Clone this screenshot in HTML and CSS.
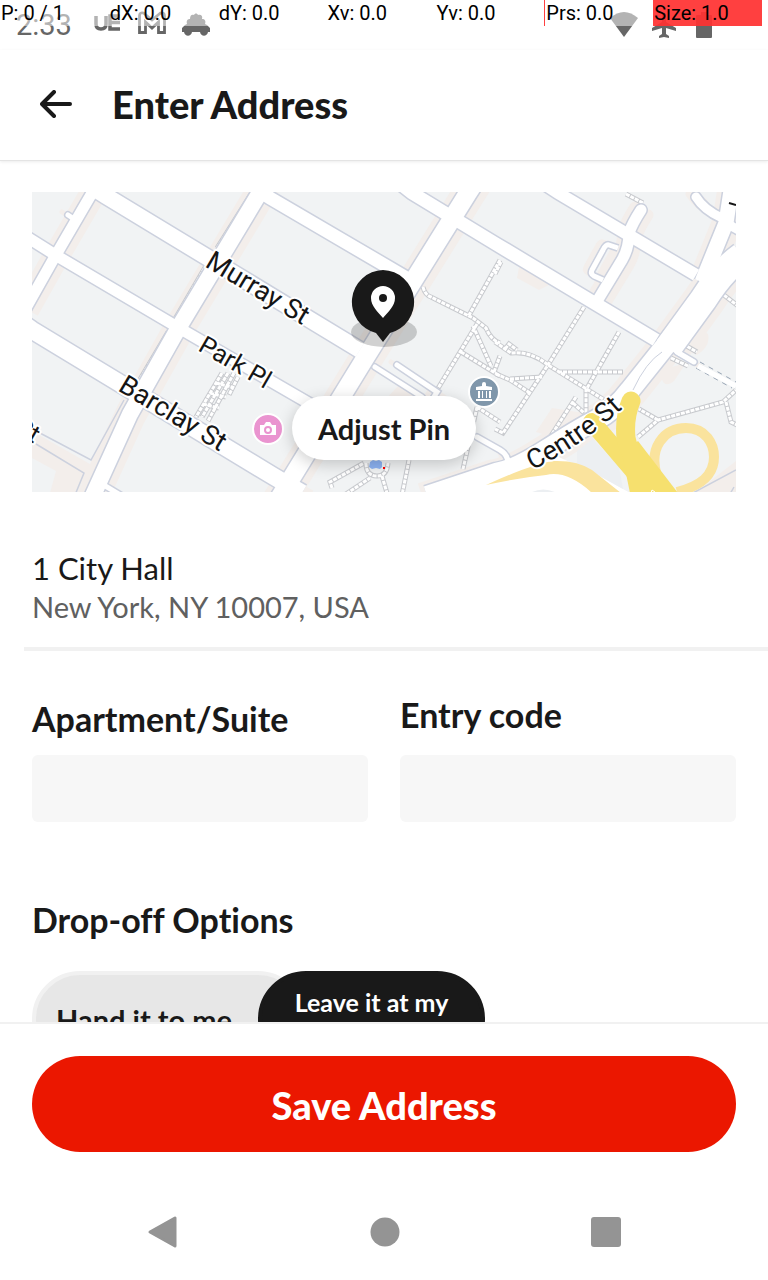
FILE: index.html
```html
<!DOCTYPE html>
<html lang="en">
<head>
<meta charset="utf-8">
<meta name="viewport" content="width=device-width, initial-scale=1">
<title>Enter Address</title>
<link rel="stylesheet" href="styles.css">
</head>
<body>
<div class="screen">
  <div class="status">
    <span class="clock">2:33</span>
    <svg class="status-icon" width="28" height="28" viewBox="0 0 28 28"><path d="M2 5v8q0 5 5 5t5-5V5M26 5H16v13h10M16 11.500h10" fill="none" stroke="#666" stroke-width="3.500"/></svg>
    <svg class="status-icon" width="28" height="28" viewBox="0 0 28 28"><path d="M1.500 21.500V5q0-4 4-3l8.500 7 8.500-7q4-1 4 3v16.500h-6V11L14 17l-6.500-6v10.500z" fill="none" stroke="#666" stroke-width="2.800"/></svg>
    <svg class="status-icon" width="28" height="28" viewBox="0 0 28 28"><path d="M5 13c-1-4 1-5 3-5 0-4 2-5 4-4 1-2 3-2 4 0 3-1 5 1 4 4 3 0 4 2 3 5l2 1 3 3v4h-2c-1 5-7 5-8 0h-8c-1 5-7 5-8 0H0v-4l3-3z" fill="#666"/></svg>
    <span class="status-gap"></span>
    <svg class="status-icon" width="28" height="28" viewBox="0 0 28 28"><path d="M0 7Q14-5 28 7L14 26z" fill="#666"/></svg>
    <svg class="status-icon" width="28" height="28" viewBox="0 0 28 28"><path d="M12 3q2-3 4 0v8l10 6v3l-10-3v6l3 2v2l-5-1-5 1v-2l3-2v-6L2 20v-3l10-6z" fill="#666"/></svg>
    <svg class="status-icon" width="28" height="28" viewBox="0 0 28 28"><path d="M7 4h4V1h6v3h4q1 0 1 1v21q0 1-1 1H7q-1 0-1-1V5q0-1 1-1z" fill="#666"/></svg>
  </div>
  <div class="pointer-bar">
    <span>P: 0 / 1</span><span>dX: 0.0</span><span>dY: 0.0</span><span>Xv: 0.0</span><span>Yv: 0.0</span><span class="pressure">Prs: 0.0</span><span class="size">Size: 1.0</span>
  </div>

  <header class="header">
    <button class="back" type="button" aria-label="Back"><svg width="32" height="28" viewBox="0 0 32 28"><path d="M30 14H2.500M14 2L2 14l12 12" fill="none" stroke="#191919" stroke-width="4" stroke-linecap="round" stroke-linejoin="round"/></svg></button>
    <h1 class="title">Enter Address</h1>
  </header>

  <main class="content">
    <section class="map">
      <svg class="map-art" viewBox="0 0 704 300" preserveAspectRatio="xMidYMid slice" role="img" aria-label="Map around City Hall">
        <defs>
          <g id="roads">
            <path d="M-10 42L25 64 147 136 280 213" stroke-width="11"/>
            <path d="M60-5L74 4 328 158" stroke-width="16"/>
            <path d="M-10 131L0 138 241 284 270 301" stroke-width="17"/>
            <path d="M226-2L238 6 378 88" stroke-width="13"/>
            <path d="M370-7L380 1 464 52 624 148" stroke-width="13"/>
            <path d="M514-7L526 1 664 83" stroke-width="12"/>
            <path d="M443-10L436 1 332 168 246 308" stroke-width="18"/>
            <path d="M233-8L227 2 147 135 98 222 58 310" stroke-width="16"/>
            <path d="M65-8L60 1 21 68-6 116" stroke-width="11"/>
            <path d="M710 64Q690 78 671 108L636 156" stroke-width="27"/>
            <path d="M642 143L598 198Q583 218 564 228T514 258 464 281L395 304" stroke-width="20"/>
            <path d="M700-8L694 31 670 90" stroke-width="15"/>
            <path d="M664 5Q672 18 690 26M694 31l16 9" stroke-width="9" stroke-linecap="round"/>
            <path d="M609 18Q600 32 597 41 597 56 590 68L567 106" stroke-width="11" stroke-linecap="round"/>
            <path d="M586 56L577 53Q574 52 571 58L560 78Q558 82 562 84L571 88" stroke-width="5"/>
            <path d="M365 173L405 200 400 208M343 175L390 205M445 245L468 258Q478 264 476 276M645 160l17 10M36 23l6 4" stroke-width="5" stroke-linecap="round"/>
            <path d="M70 292l30 18" stroke-width="5"/>
          </g>
          <g id="walks">
            <path d="M391 95q2 8 8 10l42 21 13 10q5 12 14 15M468 68l-32 57M445 132l-40 66M441 134l18 40M429 160l39 24M462 180l6-16"/>
            <path d="M552 115l-36 58-45 68-8-4M587 140l-33 58v26M526 180h65M463 150l16 11q20-2 37 12l58 36M464 182l14 6 20 13M478 187l32-2M544 205l-31 48M541 211l20 18M469 70l-6 12M473 157l4-5 8 6"/>
            <path d="M606 245l20-17 65-18 13-12M626 228l-19-11M694 210l5 20 8 4M688 100l18 14M651 152l14 8M639 166l17 8M594 2l17 9"/>
            <path d="M300 296l-2-6 34-19M302 310l36-24M334 271q0 13 11 13 10 0 11-13M350 284l7 24M377 268l-8 40M445 215l23 15M445 215l-14 62"/>
            <path d="M219 2l-34 54M175 72l-32 55M136 140l-29 49M190 181l-26 44M202 181l-26 48M196 181l-26 44M206 185l-9 18M184 191l16 4M178 201l16 4M171 212l16 4"/>
          </g>
          <path id="centre" d="M500 278Q550 255 602 206"/>
        </defs>
        <rect width="704" height="300" fill="#f1f3f4"/>
        <use href="#roads" fill="none" stroke="#f3eeeb" transform="translate(7 5)"/>
        <use href="#roads" fill="none" stroke="#f3eeeb" transform="translate(-6 -3)"/>
        <path d="M90 205L58 272 0 239v24l52 29-6 10h16l44-92zM0 252v14l24 13-6 22h28l8-20z" fill="#f3eeeb"/>
        <path d="M665 135q-17-3-22 19l22 9q14-9 11-21zM629 178l25-7-12 18q-13 10-13-11zM504 240l16-24 38 6-31 25zM366 194l32 14-12 22-33-22zM664 300l40-31v31zM487 75l38 14-18 9-22-12z" fill="#f3eeeb"/>
        <path d="M92 208L59 268 6 240M4 252l48 29-9 22M704 278l-45 24M702 295l-4 7" fill="none" stroke="#ccd1de" stroke-width="1.500"/>
        <use href="#walks" fill="none" stroke="#c8cace" stroke-width="5"/>
        <use href="#walks" fill="none" stroke="#fff" stroke-width="3" stroke-dasharray="4 1"/>
        <g class="road-edge">
            <path d="M-10 42L25 64 147 136 280 213" stroke-width="14"/>
            <path d="M60-5L74 4 328 158" stroke-width="19"/>
            <path d="M-10 131L0 138 241 284 270 301" stroke-width="20"/>
            <path d="M226-2L238 6 378 88" stroke-width="16"/>
            <path d="M370-7L380 1 464 52 624 148" stroke-width="16"/>
            <path d="M514-7L526 1 664 83" stroke-width="15"/>
            <path d="M443-10L436 1 332 168 246 308" stroke-width="21"/>
            <path d="M233-8L227 2 147 135 98 222 58 310" stroke-width="19"/>
            <path d="M65-8L60 1 21 68-6 116" stroke-width="14"/>
            <path d="M710 64Q690 78 671 108L636 156" stroke-width="30"/>
            <path d="M642 143L598 198Q583 218 564 228T514 258 464 281L395 304" stroke-width="23"/>
            <path d="M700-8L694 31 670 90" stroke-width="18"/>
            <path d="M664 5Q672 18 690 26M694 31l16 9" stroke-width="12" stroke-linecap="round"/>
            <path d="M609 18Q600 32 597 41 597 56 590 68L567 106" stroke-width="14" stroke-linecap="round"/>
            <path d="M586 56L577 53Q574 52 571 58L560 78Q558 82 562 84L571 88" stroke-width="8"/>
            <path d="M365 173L405 200 400 208M343 175L390 205M445 245L468 258Q478 264 476 276M645 160l17 10M36 23l6 4" stroke-width="8" stroke-linecap="round"/>
            <path d="M70 292l30 18" stroke-width="8"/>
        </g>
        <use href="#roads" fill="none" stroke="#fff"/>
        <path d="M400 304L470 282 520 262 560 280 600 302z" fill="#fff"/>
        <path d="M498 301q13-7 27 0zM545 259l16-12 26 28 4 22-46-26z" fill="#eceff2"/>
        <path d="M630 160q-16 10-29 38" fill="none" stroke="#ccd1de"/>
        <path d="M668 170l36 20M664 176l36 20" fill="none" stroke="#98a5b5" stroke-dasharray="5 5"/>
        <path d="M666 174l38 20" fill="none" stroke="#fff" stroke-width="5"/>
        <path d="M454 293Q500 272 521 269 545 268 560 278L589 301H560Q535 278 514 283 485 286 454 293z" fill="#fae39d"/>
        <path d="M625 284C616 256 632 236 654 236 674 236 682 252 682 265 682 284 668 294 645 300" fill="none" stroke="#fae39d" stroke-width="10"/>
        <path d="M560 230L612 291" fill="none" stroke="#f6e06e" stroke-width="18" stroke-linecap="round"/>
        <path d="M599 209Q592 226 594 246 598 266 618 288" fill="none" stroke="#f6e06e" stroke-width="19" stroke-linecap="round"/>
        <path d="M590 262L606 249 646 301H598z" fill="#f6e06e"/>
        <path d="M619 301l1-3 3 2" fill="none" stroke="#fff"/>
        <path d="M338 270l3-2 3 1 3-1 3 2v5l-2 2-4-1-4 1-3-2z" fill="#8db3f3"/>
        <rect x="351" y="275" width="2" height="2" fill="#f00"/>
        <g class="street">
          <text transform="translate(172 74) rotate(31)" font-size="27">Murray St</text>
          <text transform="translate(165 158) rotate(30)" font-size="25">Park Pl</text>
          <text transform="translate(85 198) rotate(31)" font-size="27">Barclay St</text>
          <text transform="translate(-18 240) rotate(30)" font-size="25">St</text>
          <text font-size="27"><textPath href="#centre">Centre St</textPath></text>
        </g>
        <path d="M697 11l7 2" stroke="#151515" stroke-width="2"/>
        <g transform="translate(452 200)"><circle r="15" fill="#8097ab" stroke="#fff" stroke-width="2"/><path d="M-8-2v-3l6-1v-2a2 2 0 014 0v2l6 1v3zM-8 7h16v2H-8zM-6-1h2v7h-2zM-2-1h1v7h-1zM2-1h1v7H2zM5-1h2v7H5z" fill="#fff"/></g>
        <g transform="translate(236 237)"><circle r="15" fill="#ea94d0" stroke="#fff" stroke-width="2"/><path d="M-8-4h4l2-3h4l2 3h4v10H-8z" fill="#fff"/><circle cy="1" r="3" fill="#fff" stroke="#ea94d0" stroke-width="2"/></g>
      </svg>
      <svg class="pin" width="68" height="80" viewBox="0 0 68 80"><ellipse cx="34" cy="62" rx="33" ry="15" fill="#000" fill-opacity=".18"/><path d="M33 0a32 32 0 017 63l-7 9-7-9A32 32 0 0133 0z" fill="#191919"/><path d="M33 48C28 42 21 36 21 28a12 12 0 0124 0c0 8-7 14-12 20z" fill="#fff"/><circle cx="33" cy="28" r="4" fill="#191919"/></svg>
      <button class="adjust" type="button">Adjust Pin</button>
    </section>

    <section class="address">
      <p class="street-line">1 City Hall</p>
      <p class="city-line">New York, NY 10007, USA</p>
    </section>

    <form class="fields">
      <div class="field"><label class="label" for="suite">Apartment/Suite</label><input class="input" id="suite" type="text"></div>
      <div class="field"><label class="label label-raised" for="code">Entry code</label><input class="input" id="code" type="text"></div>
    </form>

    <h2 class="subtitle">Drop-off Options</h2>
    <div class="toggle">
      <button class="option" type="button" aria-pressed="false">Hand it to me</button>
      <button class="option option-on" type="button" aria-pressed="true">Leave it at my door</button>
    </div>
  </main>

  <footer class="footer"><button class="save" type="button">Save Address</button></footer>
  <nav class="nav" aria-label="System">
    <button class="nav-button" type="button" aria-label="Back"><svg width="32" height="34" viewBox="0 0 32 34"><path d="M28 3v28L3 17z" fill="#949494" stroke="#949494" stroke-width="3" stroke-linejoin="round"/></svg></button>
    <button class="nav-button" type="button" aria-label="Home"><svg width="32" height="32" viewBox="0 0 32 32"><circle cx="16" cy="16" r="14.500" fill="#949494"/></svg></button>
    <button class="nav-button" type="button" aria-label="Recents"><svg width="30" height="32" viewBox="0 0 30 32"><rect y="1" width="30" height="30" rx="3" fill="#949494"/></svg></button>
  </nav>
</div>
</body>
</html>
```

FILE: styles.css
```css
* { box-sizing: border-box; }
body { margin: 0; background: #fff; color: #191919; font-family: Lato, "Liberation Sans", sans-serif; font-variant-ligatures: none; }
h1, h2, p { margin: 0; }
button { border: 0; padding: 0; background: none; color: inherit; font: inherit; }
svg { display: block; }

.screen { position: relative; display: flex; flex-direction: column; height: 100vh; overflow: hidden; }

.status { display: flex; flex: none; align-items: center; gap: 16px; height: 50px; padding: 0 50px 0 16px; }
.clock { margin-right: 6px; color: #666; font: 29px/48px Roboto, sans-serif; }
.status-gap { flex: 1; }
.status-icon { flex: none; }
.status-icon:nth-last-child(-n+2) { margin-left: -4px; }

.pointer-bar { position: absolute; top: 0; left: 0; display: grid; grid-template-columns: repeat(7, 1fr); width: 100%; padding-right: 6px; background: rgba(255, 255, 255, .5); color: #000; font: 20px/26px Roboto, sans-serif; }
.pointer-bar span { padding-left: 1px; white-space: nowrap; }
.pointer-bar .pressure { border-left: 1px solid #ff4040; }
.pointer-bar .size { background: rgba(255, 30, 30, .85); }

.header { display: flex; flex: none; align-items: center; gap: 40px; height: 111px; padding: 0 40px 2px; border-bottom: 1px solid #e4e4e4; box-shadow: 0 1px 3px rgba(0, 0, 0, .08); }
.title { font-size: 38px; font-weight: 900; line-height: 48px; }

.content { flex: 1; min-height: 0; padding-top: 31px; overflow-y: auto; scrollbar-width: none; }
.map { position: relative; height: 300px; margin: 0 32px; overflow: hidden; }
.map-art { width: 100%; height: 100%; }
.road-edge { fill: none; stroke: #ccd1de; }
.street { fill: #151515; font-family: Roboto, sans-serif; stroke: #fff; stroke-width: 4px; stroke-linejoin: round; paint-order: stroke; }
.pin { position: absolute; top: 78px; left: calc(50% - 34px); }
.adjust { position: absolute; bottom: 32px; left: 50%; width: 184px; height: 64px; margin-left: -92px; border-radius: 32px; background: #fff; box-shadow: 0 4px 16px rgba(0, 0, 0, .2); font-size: 29px; font-weight: 700; }

.address { margin-left: 24px; padding: 57px 8px 22px; border-bottom: 4px solid #f1f1f1; }
.street-line { font-size: 31px; line-height: 39px; }
.city-line { color: #606060; font-size: 29px; line-height: 37px; }

.fields { display: grid; grid-template-columns: 1fr 1fr; gap: 32px; padding: 48px 32px 0; }
.field { display: flex; flex-direction: column; }
.label, .subtitle { font-size: 34px; font-weight: 700; line-height: 40px; }
.label { padding: 0 0 16px; }
.label-raised { margin-top: -4px; padding-bottom: 20px; }
.input { width: 100%; height: 67px; padding: 0 16px; border: 0; border-radius: 6px; background: #f7f7f7; font: inherit; font-size: 29px; }

.subtitle { padding: 78px 32px 31px; }
.toggle { display: flex; padding: 0 32px; }
.option { width: 274px; height: 96px; padding: 0 20px; border: 4px solid #f1f1f1; border-radius: 48px; background: #e7e7e7; font-size: 29px; font-weight: 700; text-align: left; white-space: nowrap; }
.option-on { width: 227px; margin-left: -48px; padding: 0 24px; border-color: #191919; background: #191919; color: #fff; font-size: 25px; line-height: 34px; text-align: center; white-space: normal; }

.footer { flex: none; padding: 32px; border-top: 2px solid #f1f1f1; }
.save { display: block; width: 100%; height: 96px; padding-top: 2px; border-radius: 48px; background: #eb1700; color: #fff; font-size: 38px; font-weight: 900; }
.nav { display: flex; flex: none; align-items: center; justify-content: center; gap: 190px; height: 96px; }
```
